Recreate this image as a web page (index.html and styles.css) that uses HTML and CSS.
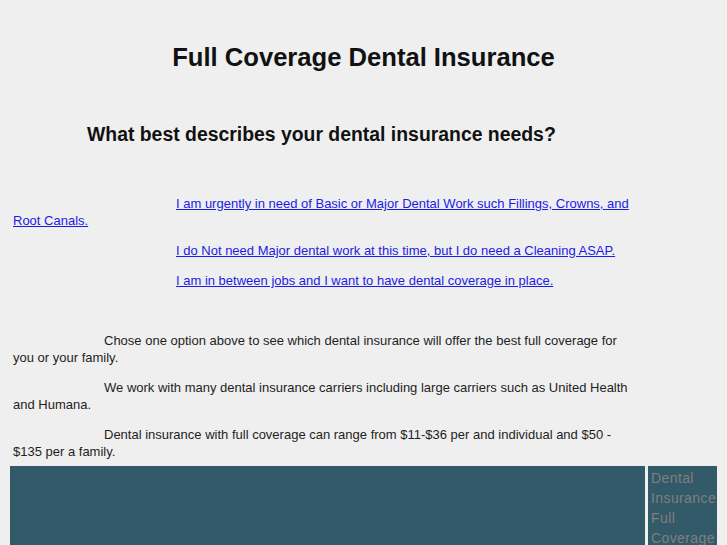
FILE: index.html
```html
<!DOCTYPE html>
<html>
<head>
<meta charset="utf-8">
<link rel="stylesheet" href="styles.css">
</head>
<body>
<div class="page">
  <div class="top">
    <h1 class="title">Full Coverage Dental Insurance</h1>
    <h2 class="question">What best describes your dental insurance needs?</h2>
    <div class="options">
      <p class="opt"><a href="#">I am urgently in need of Basic or Major Dental Work such Fillings, Crowns, and Root Canals.</a></p>
      <p class="opt"><a href="#">I do Not need Major dental work at this time, but I do need a Cleaning ASAP.</a></p>
      <p class="opt"><a href="#">I am in between jobs and I want to have dental coverage in place.</a></p>
    </div>
    <div class="info">
      <p class="para">Chose one option above to see which dental insurance will offer the best full coverage for you or your family.</p>
      <p class="para">We work with many dental insurance carriers including large carriers such as United Health and Humana.</p>
      <p class="para last">Dental insurance with full coverage can range from $11-$36 per and individual and $50 - $135 per a family.</p>
    </div>
  </div>
  <div class="bottom">
    <div class="main-box"></div>
    <div class="side-box">Dental Insurance Full Coverage</div>
  </div>
</div>
</body>
</html>
```
FILE: styles.css
```css
html, body {
  margin: 0;
  padding: 0;
  background: #efefef;
}
body {
  font-family: "Liberation Sans", Arial, sans-serif;
  color: #1e1e1e;
  overflow: hidden;
  height: 545px;
}
.page {
  padding: 0 10px;
}
.top {
  width: 635px;
  box-sizing: border-box;
  padding: 0 10px 0 3px;
}
.title {
  margin: 0;
  padding-top: 42px;
  font-size: 25.6px;
  font-weight: bold;
  line-height: 30px;
  text-align: center;
  width: 701px;
  color: #111;
}
.question {
  margin: 0;
  padding-top: 51px;
  padding-left: 74px;
  font-size: 19.4px;
  font-weight: bold;
  line-height: 22px;
  color: #111;
}
.options {
  padding-top: 50px;
}
.opt {
  margin: 0 0 13px;
  font-size: 13px;
  line-height: 17px;
  text-indent: 163px;
}
.opt a {
  color: #1c1ce6;
  text-decoration: underline;
}
.info {
  padding-top: 30px;
}
.para {
  margin: 0 0 13px;
  font-size: 13px;
  line-height: 17px;
  text-indent: 91px;
}
.para.last {
  margin-bottom: 6px;
}
.bottom {
  display: flex;
  gap: 3px;
}
.main-box {
  width: 635px;
  height: 100px;
  background: #335a68;
}
.side-box {
  width: 69px;
  height: 100px;
  background: #335a68;
  color: #7f7f7f;
  font-size: 14px;
  letter-spacing: 0.4px;
  line-height: 20px;
  padding: 2px 3px;
  box-sizing: border-box;
  overflow: hidden;
}
```
